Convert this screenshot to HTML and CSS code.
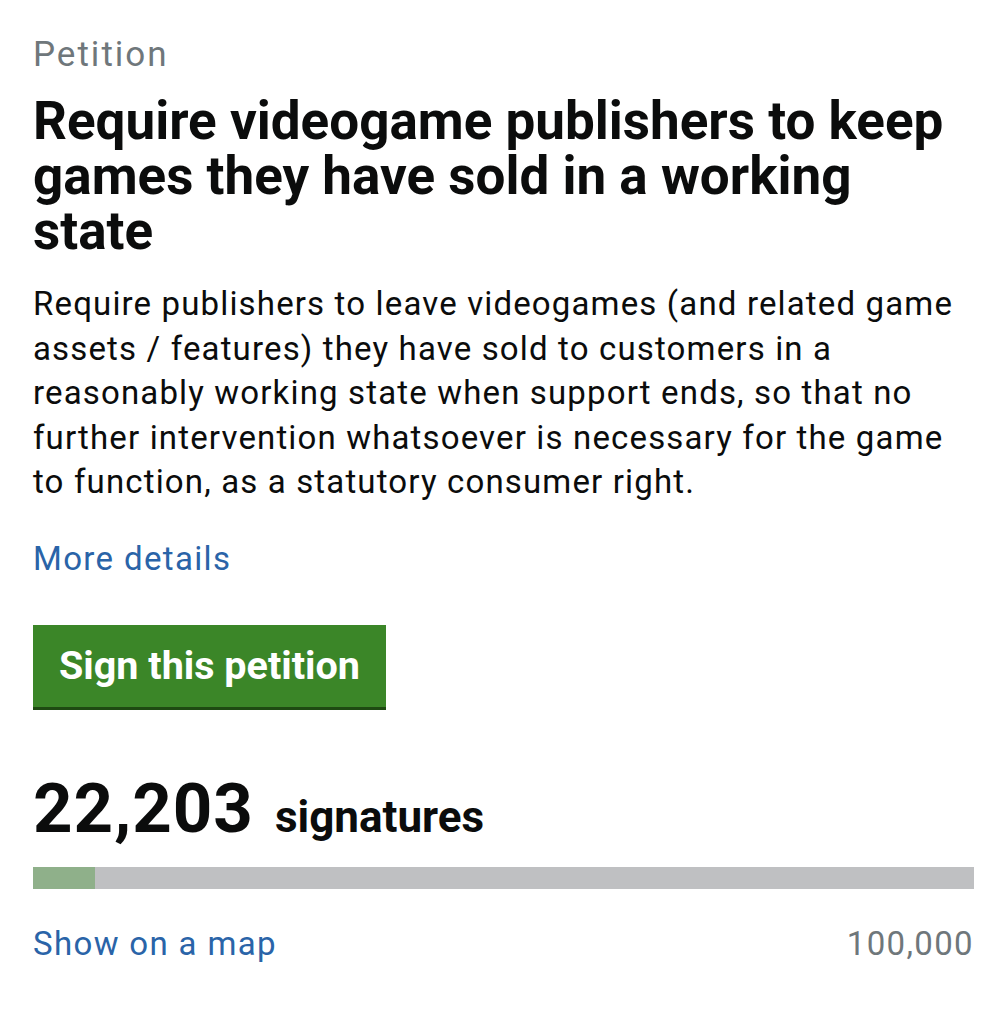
FILE: index.html
```html
<!DOCTYPE html>
<html lang="en">
<head>
<meta charset="utf-8">
<title>Petition</title>
<link rel="stylesheet" href="styles.css">
</head>
<body>
<main class="page">
  <div class="kicker">Petition</div>
  <h1 class="title">Require videogame publishers to keep games they have sold in a working state</h1>
  <p class="summary">Require publishers to leave videogames (and related game assets / features) they have sold to customers in a reasonably working state when support ends, so that no further intervention whatsoever is necessary for the game to function, as a statutory consumer right.</p>
  <div class="details"><a class="link" href="#">More details</a></div>
  <div class="actions"><a class="button" href="#">Sign this petition</a></div>
  <div class="count"><span class="num">22,203</span><span class="label">signatures</span></div>
  <div class="bar"><div class="fill" style="width: 62px"></div></div>
  <div class="foot">
    <a class="link" href="#">Show on a map</a>
    <span class="target">100,000</span>
  </div>
</main>
</body>
</html>
```
FILE: styles.css
```css
html, body {
  margin: 0;
  padding: 0;
  background: #ffffff;
}
body {
  font-family: Roboto, "Noto Sans", sans-serif;
  color: #0b0c0c;
}
.page {
  width: 941px;
  padding: 35px 0 0 33px;
}
.kicker {
  font-size: 35px;
  line-height: 40px;
  letter-spacing: 2px;
  color: #6f777b;
}
.title {
  margin: 19px 0 0 0;
  font-size: 53px;
  line-height: 55px;
  font-weight: 700;
}
.summary {
  margin: 23px 0 0 0;
  font-size: 33px;
  line-height: 44.5px;
  letter-spacing: 1.15px;
}
.link {
  color: #2a64a8;
  text-decoration: none;
  font-size: 33px;
  line-height: 40px;
  letter-spacing: 1.35px;
}
.details {
  margin-top: 34px;
  line-height: 40px;
}
.actions {
  margin-top: 40px;
  display: flex;
}
.button {
  display: block;
  background: #3b8628;
  color: #ffffff;
  text-decoration: none;
  font-weight: 700;
  font-size: 39.5px;
  line-height: 82px;
  padding: 0 26px;
  box-shadow: 0 3px 0 #1e4a12;
}
.count {
  margin-top: 67px;
  display: flex;
  align-items: baseline;
  gap: 21px;
  line-height: 70px;
}
.num {
  font-size: 69px;
  font-weight: 700;
  letter-spacing: 1px;
}
.label {
  font-size: 44px;
  font-weight: 700;
}
.bar {
  margin-top: 15px;
  height: 22px;
  background: #bfc0c2;
}
.fill {
  height: 100%;
  background: #8fb08a;
}
.foot {
  margin-top: 35px;
  display: flex;
  justify-content: space-between;
  align-items: baseline;
  line-height: 40px;
}
.target {
  font-size: 33px;
  letter-spacing: 1.35px;
  color: #6f777b;
}
```
